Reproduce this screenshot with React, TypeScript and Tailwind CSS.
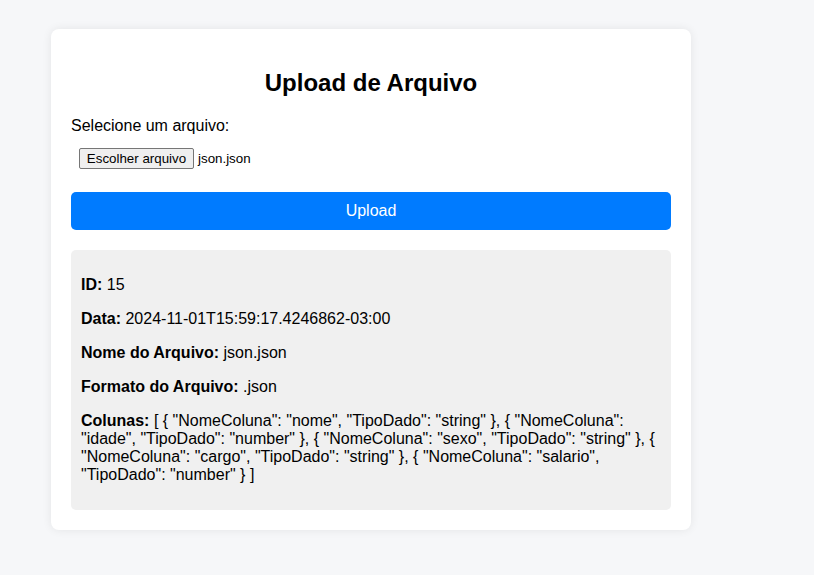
import React from 'react';

const colunas =
  '[ { "NomeColuna": "nome", "TipoDado": "string" }, { "NomeColuna": "idade", "TipoDado": "number" }, { "NomeColuna": "sexo", "TipoDado": "string" }, { "NomeColuna": "cargo", "TipoDado": "string" }, { "NomeColuna": "salario", "TipoDado": "number" } ]';

const App: React.FC = () => {
  return (
    <div className="min-h-[575px] bg-[#f6f7f9] pt-[29px] pb-[45px] font-['Liberation_Sans',Arial,sans-serif] text-black">
      <div className="ml-[51px] w-[640px] rounded-lg bg-white p-5 shadow-[0_0_10px_rgba(0,0,0,0.08)]">
        <h2 className="mt-[20px] mb-5 text-center text-2xl leading-[28px] font-bold">Upload de Arquivo</h2>

        <label className="block text-base leading-[18px]">Selecione um arquivo:</label>

        {/* input de arquivo */}
        <div className="mt-[13px] flex items-center gap-1 px-2">
          <button className="h-[21px] w-[115px] rounded-[2px] border border-[#767676] bg-[#efefef] text-[13.33px] leading-[15px]">
            Escolher arquivo
          </button>
          <span className="text-[13.33px]">json.json</span>
        </div>

        <button className="mt-[23px] h-[38px] w-full rounded-[5px] bg-[#007bff] text-base text-white">
          Upload
        </button>

        {/* Resultado */}
        <div className="mt-5 rounded-[5px] bg-[#f0f0f0] px-[10px] py-[10px] text-base leading-[18px]">
          <p className="my-4">
            <strong>ID:</strong> 15
          </p>
          <p className="my-4">
            <strong>Data:</strong> 2024-11-01T15:59:17.4246862-03:00
          </p>
          <p className="my-4">
            <strong>Nome do Arquivo:</strong> json.json
          </p>
          <p className="my-4">
            <strong>Formato do Arquivo:</strong> .json
          </p>
          <p className="my-4">
            <strong>Colunas:</strong> {colunas}
          </p>
        </div>
      </div>
    </div>
  );
};

export default App;
